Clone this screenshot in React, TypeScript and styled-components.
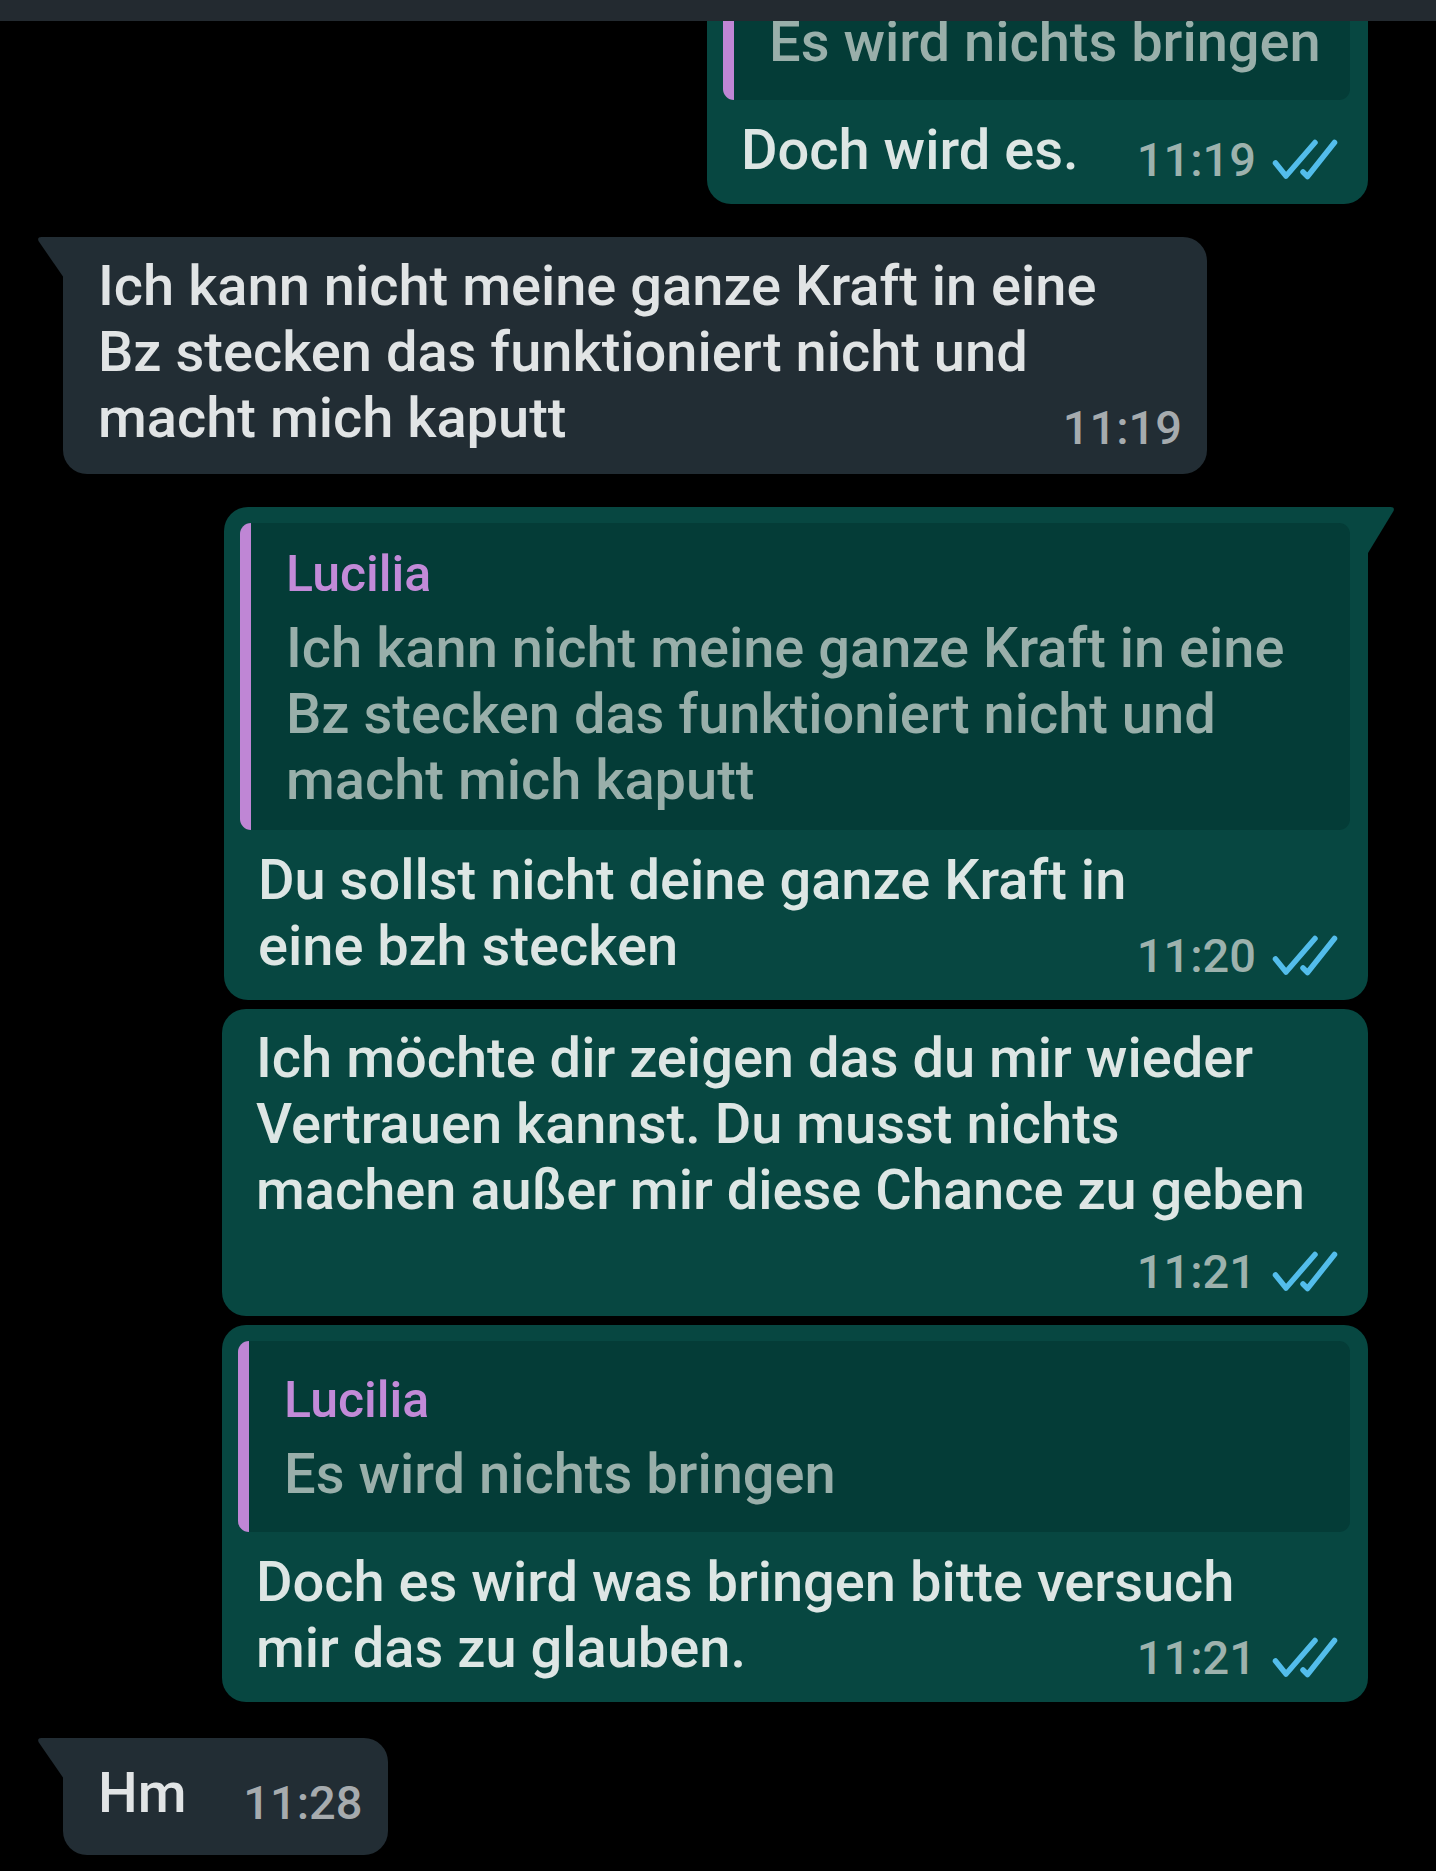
import React from 'react';
import styled, { createGlobalStyle, css } from 'styled-components';

const GlobalStyle = createGlobalStyle`
  html, body { margin: 0; padding: 0; background: #000; }
  body { font-family: Roboto, "Noto Sans", "Liberation Sans", sans-serif; }
  #root { width: 1436px; height: 1871px; overflow: hidden; }
`;

const Screen = styled.div`
  width: 1436px;
  height: 1871px;
  background: #000;
  display: flex;
  flex-direction: column;
  overflow: hidden;
`;

const TopBar = styled.div`
  flex: none;
  height: 21px;
  background: #232a30;
`;

const ChatArea = styled.div`
  flex: 1;
  overflow: hidden;
`;

const MessageList = styled.div`
  display: flex;
  flex-direction: column;
  margin-top: -128px;
`;

type BubbleProps = {
  $out: boolean;
  $tail?: boolean;
  $width?: number;
  $gap: number;
  $roomy?: boolean;
};

const Bubble = styled.div<BubbleProps>`
  position: relative;
  box-sizing: border-box;
  width: ${(p) => (p.$width ? `${p.$width}px` : 'fit-content')};
  margin-top: ${(p) => p.$gap}px;
  align-self: ${(p) => (p.$out ? 'flex-end' : 'flex-start')};
  margin-right: ${(p) => (p.$out ? '68px' : '0')};
  margin-left: ${(p) => (p.$out ? '0' : '63px')};
  background: ${(p) => (p.$out ? '#074741' : '#222d34')};
  border-radius: 24px;
  padding: ${(p) =>
    p.$out ? '16px 18px 21px 16px' : p.$roomy ? '22px 25px 29px 35px' : '16px 25px 23px 35px'};

  ${(p) =>
    p.$tail &&
    !p.$out &&
    css`
      border-top-left-radius: 0;
      &::before {
        content: '';
        position: absolute;
        top: 0;
        left: -26px;
        width: 27px;
        height: 41px;
        background: inherit;
        clip-path: path('M27 0 L27 41 L1.5 4 Q0 0 4.5 0 Z');
      }
    `}

  ${(p) =>
    p.$tail &&
    p.$out &&
    css`
      border-top-right-radius: 0;
      &::before {
        content: '';
        position: absolute;
        top: 0;
        right: -27px;
        width: 28px;
        height: 46px;
        background: inherit;
        clip-path: path('M0 0 L23.5 0 Q28 0 26.5 4 L1 46 L0 46 Z');
      }
    `}
`;

const Quote = styled.div`
  box-sizing: border-box;
  min-height: 191px;
  margin-bottom: 17px;
  display: flex;
  flex-direction: column;
  justify-content: center;
  background: #043c37;
  border-left: 11px solid #bf86d5;
  border-radius: 11px;
  padding: 20px 24px 17px 35px;
`;

const QuoteName = styled.div`
  font-size: 50px;
  font-weight: 500;
  line-height: 62px;
  color: #c28ad8;
`;

const QuoteText = styled.div`
  margin-top: 10px;
  font-size: 56px;
  font-weight: 500;
  line-height: 66px;
  color: #99afaa;
`;

const Body = styled.div<{ $out: boolean }>`
  display: grid;
  padding-left: ${(p) => (p.$out ? '18px' : '0')};
`;

const Text = styled.div<{ $out: boolean }>`
  grid-area: 1 / 1;
  font-size: 56px;
  font-weight: 500;
  line-height: 66px;
  color: ${(p) => (p.$out ? '#dde6e4' : '#e1e4e5')};
`;

const Line = styled.div`
  white-space: pre;
`;

const Spacer = styled.span<{ $w: number }>`
  display: inline-block;
  width: ${(p) => p.$w}px;
`;

const Meta = styled.div<{ $out: boolean; $below?: boolean }>`
  grid-area: ${(p) => (p.$below ? '2 / 1' : '1 / 1')};
  justify-self: end;
  align-self: end;
  display: flex;
  align-items: center;
  gap: 16px;
  height: 46px;
  margin-right: ${(p) => (p.$out ? '12px' : '0')};
  margin-top: ${(p) => (p.$below ? '26px' : '0')};
`;

const Time = styled.span<{ $out: boolean }>`
  font-size: 47px;
  font-weight: 500;
  line-height: 46px;
  color: ${(p) => (p.$out ? '#9db2ad' : '#a6abae')};
`;

const Checks = () => (
  <svg
    width="66"
    height="42"
    viewBox="0 0 66 42"
    fill="none"
    stroke="#53bdeb"
    strokeWidth="5.5"
    strokeLinecap="round"
    strokeLinejoin="round"
  >
    <path d="M3.5 24 L14 37 L43 3.5" />
    <path d="M31 33 L35.5 37.5 L62.5 3.5" />
  </svg>
);

type Msg = {
  id: number;
  out: boolean;
  gap: number;
  width?: number;
  tail?: boolean;
  roomy?: boolean;
  quote?: { name: string; lines: string[] };
  lines: string[];
  time: string;
  metaBelow?: boolean;
};

const messages: Msg[] = [
  {
    id: 1,
    out: true,
    gap: 0,
    width: 661,
    quote: { name: 'Lucilia', lines: ['Es wird nichts bringen'] },
    lines: ['Doch wird es.'],
    time: '11:19',
  },
  {
    id: 2,
    out: false,
    gap: 33,
    width: 1144,
    tail: true,
    lines: [
      'Ich kann nicht meine ganze Kraft in eine',
      'Bz stecken das funktioniert nicht und',
      'macht mich kaputt',
    ],
    time: '11:19',
  },
  {
    id: 3,
    out: true,
    gap: 33,
    width: 1144,
    tail: true,
    quote: {
      name: 'Lucilia',
      lines: [
        'Ich kann nicht meine ganze Kraft in eine',
        'Bz stecken das funktioniert nicht und',
        'macht mich kaputt',
      ],
    },
    lines: ['Du sollst nicht deine ganze Kraft in', 'eine bzh stecken'],
    time: '11:20',
  },
  {
    id: 4,
    out: true,
    gap: 9,
    width: 1146,
    lines: [
      'Ich möchte dir zeigen das du mir wieder',
      'Vertrauen kannst. Du musst nichts',
      'machen außer mir diese Chance zu geben',
    ],
    time: '11:21',
    metaBelow: true,
  },
  {
    id: 5,
    out: true,
    gap: 9,
    width: 1146,
    quote: { name: 'Lucilia', lines: ['Es wird nichts bringen'] },
    lines: ['Doch es wird was bringen bitte versuch', 'mir das zu glauben.'],
    time: '11:21',
  },
  {
    id: 6,
    out: false,
    gap: 36,
    tail: true,
    roomy: true,
    lines: ['Hm'],
    time: '11:28',
  },
];

const Message = ({ m }: { m: Msg }) => (
  <Bubble $out={m.out} $tail={m.tail} $width={m.width} $gap={m.gap} $roomy={m.roomy}>
    {m.quote && (
      <Quote>
        <QuoteName>{m.quote.name}</QuoteName>
        <QuoteText>
          {m.quote.lines.map((l, i) => (
            <Line key={i}>{l}</Line>
          ))}
        </QuoteText>
      </Quote>
    )}
    <Body $out={m.out}>
      <Text $out={m.out}>
        {m.lines.map((l, i) => (
          <Line key={i}>
            {l}
            {!m.metaBelow && i === m.lines.length - 1 && <Spacer $w={m.out ? 230 : 176} />}
          </Line>
        ))}
      </Text>
      <Meta $out={m.out} $below={m.metaBelow}>
        <Time $out={m.out}>{m.time}</Time>
        {m.out && <Checks />}
      </Meta>
    </Body>
  </Bubble>
);

export default function App() {
  return (
    <>
      <GlobalStyle />
      <Screen>
        <TopBar />
        <ChatArea>
          <MessageList>
            {messages.map((m) => (
              <Message key={m.id} m={m} />
            ))}
          </MessageList>
        </ChatArea>
      </Screen>
    </>
  );
}
